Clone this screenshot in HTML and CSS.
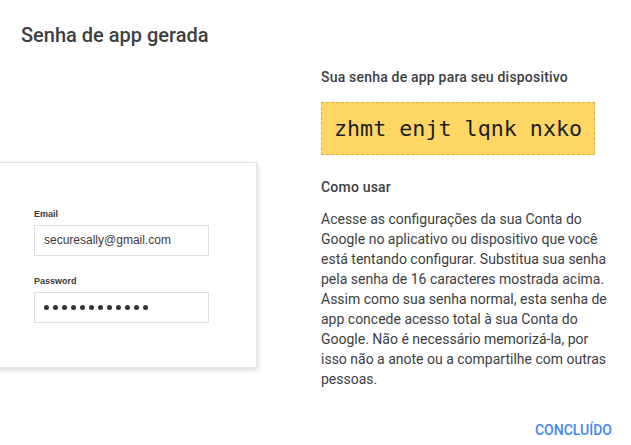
FILE: index.html
```html
<!DOCTYPE html>
<html lang="pt-BR">
<head>
    <meta charset="UTF-8">
    <meta name="viewport" content="width=device-width, initial-scale=1.0">
    <title>Senha de app gerada</title>
    <link rel="stylesheet" href="styles.css">
</head>
<body>
    <h1 class="title">Senha de app gerada</h1>

    <div class="content">
        <div class="preview">
            <div class="login-card">
                <label class="field-label">Email</label>
                <div class="field">securesally@gmail.com</div>

                <label class="field-label pass-label">Password</label>
                <div class="field dots">
                    <span></span><span></span><span></span><span></span>
                    <span></span><span></span><span></span><span></span>
                    <span></span><span></span><span></span><span></span>
                </div>
            </div>
        </div>

        <div class="details">
            <h2 class="subtitle">Sua senha de app para seu dispositivo</h2>
            <div class="app-password">zhmt enjt lqnk nxko</div>

            <h2 class="subtitle how-to">Como usar</h2>
            <p class="help">
                Acesse as configurações da sua Conta do<br>
                Google no aplicativo ou dispositivo que você<br>
                está tentando configurar. Substitua sua senha<br>
                pela senha de 16 caracteres mostrada acima.<br>
                Assim como sua senha normal, esta senha de<br>
                app concede acesso total à sua Conta do<br>
                Google. Não é necessário memorizá-la, por<br>
                isso não a anote ou a compartilhe com outras<br>
                pessoas.
            </p>
        </div>
    </div>

    <div class="footer">
        <button class="done-btn">Concluído</button>
    </div>
</body>
</html>
```

FILE: styles.css
```css
body {
    margin: 0;
    font-family: Roboto, "Liberation Sans", Arial, sans-serif;
    color: #3c4043;
    background: #ffffff;
    overflow: hidden;
}
.title {
    margin: 0;
    padding: 21px 21px 0;
    font-size: 20px;
    line-height: 28px;
    font-weight: 500;
}
.content {
    display: flex;
    padding-top: 19px;
}
.preview {
    flex: 0 0 321px;
    padding-top: 94px;
}
.login-card {
    margin-left: -10px;
    width: 222px;
    padding: 46px 0 44px 43px;
    background: #fff;
    border: 1px solid #e4e4e4;
    box-shadow: 1px 2px 5px rgba(0, 0, 0, 0.16);
    font-family: "Liberation Sans", Arial, sans-serif;
}
.field-label {
    display: block;
    font-size: 9px;
    line-height: 11px;
    font-weight: bold;
    color: #3a3a3a;
    margin-bottom: 5px;
}
.pass-label {
    margin-top: 20px;
}
.field {
    box-sizing: border-box;
    width: 175px;
    height: 31px;
    border: 1px solid #dedede;
    padding: 0 9px;
    font-size: 12px;
    line-height: 29px;
    color: #3a3a3a;
}
.dots {
    display: flex;
    align-items: center;
    gap: 4px;
}
.dots span {
    width: 5px;
    height: 5px;
    border-radius: 50%;
    background: #333;
}
.details {
    width: 310px;
}
.subtitle {
    margin: 0;
    font-size: 14px;
    line-height: 18px;
    font-weight: 500;
    letter-spacing: 0.2px;
}
.app-password {
    display: inline-block;
    margin-top: 16px;
    padding: 13px 12px;
    background: #fdd663;
    border: 1px dashed #d8b24a;
    font-family: "DejaVu Sans Mono", monospace;
    font-size: 21.7px;
    line-height: 25px;
    color: #202124;
}
.how-to {
    margin-top: 23px;
}
.help {
    margin: 13px 0 0;
    font-size: 14px;
    line-height: 20px;
    white-space: nowrap;
}
.footer {
    display: flex;
    justify-content: flex-end;
    padding: 31px 19px 0;
}
.done-btn {
    padding: 0;
    border: none;
    background: none;
    font-family: Roboto, Arial, sans-serif;
    font-size: 14px;
    line-height: 20px;
    font-weight: 500;
    text-transform: uppercase;
    color: #4285f4;
    cursor: pointer;
}
```
